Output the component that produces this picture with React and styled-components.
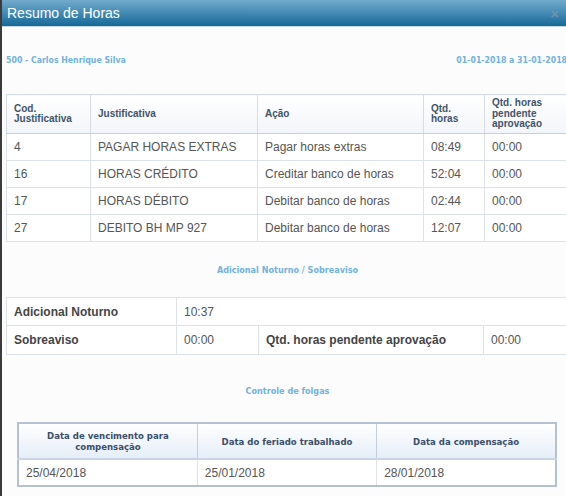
import React from "react";
import styled, { createGlobalStyle } from "styled-components";

const GlobalStyle = createGlobalStyle`
  html, body {
    margin: 0;
    padding: 0;
    background: #fcfcfc;
  }
  body {
    font-family: "Liberation Sans", Arial, sans-serif;
    overflow: hidden;
  }
`;

const Page = styled.div`
  display: flex;
  width: 566px;
  height: 496px;
  overflow: hidden;
`;

const Strip = styled.div`
  flex: 0 0 2px;
  background: #3b3b3b;
`;

const Dialog = styled.div`
  flex: 0 0 572px;
  display: flex;
  flex-direction: column;
  background: #fcfcfc;
`;

const TitleBar = styled.div`
  display: flex;
  align-items: center;
  justify-content: space-between;
  height: 26px;
  padding: 0 16px 0 5px;
  background: linear-gradient(#72aacb, #3f87b2 55%, #176896);
  border-bottom: 1px solid #c6dbe8;
  color: #fff;
  font-size: 14px;
`;

const Close = styled.span`
  color: #7d93a6;
  font-size: 15px;
  font-weight: bold;
  opacity: 0.8;
`;

const Content = styled.div`
  display: flex;
  flex-direction: column;
  padding: 0 6px 0 4px;
`;

const InfoRow = styled.div`
  display: flex;
  justify-content: space-between;
  margin-top: 28px;
  margin-bottom: 29px;
  padding-right: 2px;
  height: 10px;
  line-height: 10px;
`;

const Label = styled.span`
  font-family: "DejaVu Sans Condensed", "DejaVu Sans", sans-serif;
  font-weight: bold;
  font-size: ${(p) => p.$size || 9}px;
  color: #72b2dc;
`;

const SectionTitle = styled(Label)`
  display: block;
  text-align: center;
  margin: ${(p) => p.$top}px 0 ${(p) => p.$bottom}px;
  line-height: 10px;
`;

const Table = styled.table`
  border-collapse: collapse;
  width: 562px;
  table-layout: fixed;
  border: 1px solid #b9c7d6;
  background: #fff;
`;

const Th = styled.th`
  text-align: left;
  vertical-align: middle;
  padding: 0 7px;
  height: 38px;
  font-size: 10px;
  line-height: 10.5px;
  font-weight: bold;
  color: #3f5468;
  background: linear-gradient(#ffffff, #f2f5f9);
  border: 1px solid #d5dce5;
  border-bottom-color: #c6d1dd;
`;

const Td = styled.td`
  padding: 0 7px;
  height: ${(p) => p.$h || 26}px;
  font-size: 12px;
  color: #555;
  border: 1px solid #dde2e9;
  font-weight: ${(p) => (p.$bold ? "bold" : "normal")};
  ${(p) => p.$bold && "color: #444;"}
  white-space: nowrap;
`;

const FolgaWrap = styled.div`
  padding: 0 11px;
`;

const FolgaTable = styled.table`
  border-collapse: collapse;
  width: 540px;
  table-layout: fixed;
  border: 2px solid #b4c1d0;
  background: #fff;
`;

const FolgaTh = styled.th`
  height: 34px;
  padding: 0 8px;
  text-align: center;
  font-family: "DejaVu Sans Condensed", "DejaVu Sans", sans-serif;
  font-size: 9.5px;
  line-height: 11px;
  font-weight: bold;
  color: #3a4e6a;
  background: linear-gradient(#ffffff, #e5eef8);
  border: 1px solid #c3cfdc;
  border-bottom: 2px solid #c9d5e2;
`;

const FolgaTd = styled.td`
  height: 25px;
  padding: 0 7px;
  font-size: 12px;
  color: #555;
  border: 1px solid #dfe4ea;
`;

const rows = [
  ["4", "PAGAR HORAS EXTRAS", "Pagar horas extras", "08:49", "00:00"],
  ["16", "HORAS CRÉDITO", "Creditar banco de horas", "52:04", "00:00"],
  ["17", "HORAS DÉBITO", "Debitar banco de horas", "02:44", "00:00"],
  ["27", "DEBITO BH MP 927", "Debitar banco de horas", "12:07", "00:00"],
];

export default function App() {
  return (
    <Page>
      <GlobalStyle />
      <Strip />
      <Dialog>
        <TitleBar>
          <span>Resumo de Horas</span>
          <Close>×</Close>
        </TitleBar>
        <Content>
          <InfoRow>
            <Label $size={8.7}>500 - Carlos Henrique Silva</Label>
            <Label $size={8.7}>01-01-2018 a 31-01-2018</Label>
          </InfoRow>
          <Table>
            <colgroup>
              <col style={{ width: 84 }} />
              <col style={{ width: 167 }} />
              <col style={{ width: 166 }} />
              <col style={{ width: 61 }} />
              <col style={{ width: 84 }} />
            </colgroup>
            <thead>
              <tr>
                <Th>Cod.<br />Justificativa</Th>
                <Th>Justificativa</Th>
                <Th>Ação</Th>
                <Th>Qtd.<br />horas</Th>
                <Th>Qtd. horas<br />pendente<br />aprovação</Th>
              </tr>
            </thead>
            <tbody>
              {rows.map((r) => (
                <tr key={r[0]}>
                  {r.map((c, i) => (
                    <Td key={i} $h={26}>{c}</Td>
                  ))}
                </tr>
              ))}
            </tbody>
          </Table>
          <SectionTitle $top={23} $bottom={22}>Adicional Noturno / Sobreaviso</SectionTitle>
          <Table>
            <colgroup>
              <col style={{ width: 170 }} />
              <col style={{ width: 82 }} />
              <col style={{ width: 225 }} />
              <col style={{ width: 85 }} />
            </colgroup>
            <tbody>
              <tr>
                <Td $bold $h={27}>Adicional Noturno</Td>
                <Td colSpan={3} $h={27}>10:37</Td>
              </tr>
              <tr>
                <Td $bold $h={28}>Sobreaviso</Td>
                <Td $h={28}>00:00</Td>
                <Td $bold $h={28}>Qtd. horas pendente aprovação</Td>
                <Td $h={28}>00:00</Td>
              </tr>
            </tbody>
          </Table>
          <SectionTitle $top={31} $bottom={26}>Controle de folgas</SectionTitle>
          <FolgaWrap>
            <FolgaTable>
              <thead>
                <tr>
                  <FolgaTh>Data de vencimento para<br />compensação</FolgaTh>
                  <FolgaTh>Data do feriado trabalhado</FolgaTh>
                  <FolgaTh>Data da compensação</FolgaTh>
                </tr>
              </thead>
              <tbody>
                <tr>
                  <FolgaTd>25/04/2018</FolgaTd>
                  <FolgaTd>25/01/2018</FolgaTd>
                  <FolgaTd>28/01/2018</FolgaTd>
                </tr>
              </tbody>
            </FolgaTable>
          </FolgaWrap>
        </Content>
      </Dialog>
    </Page>
  );
}
